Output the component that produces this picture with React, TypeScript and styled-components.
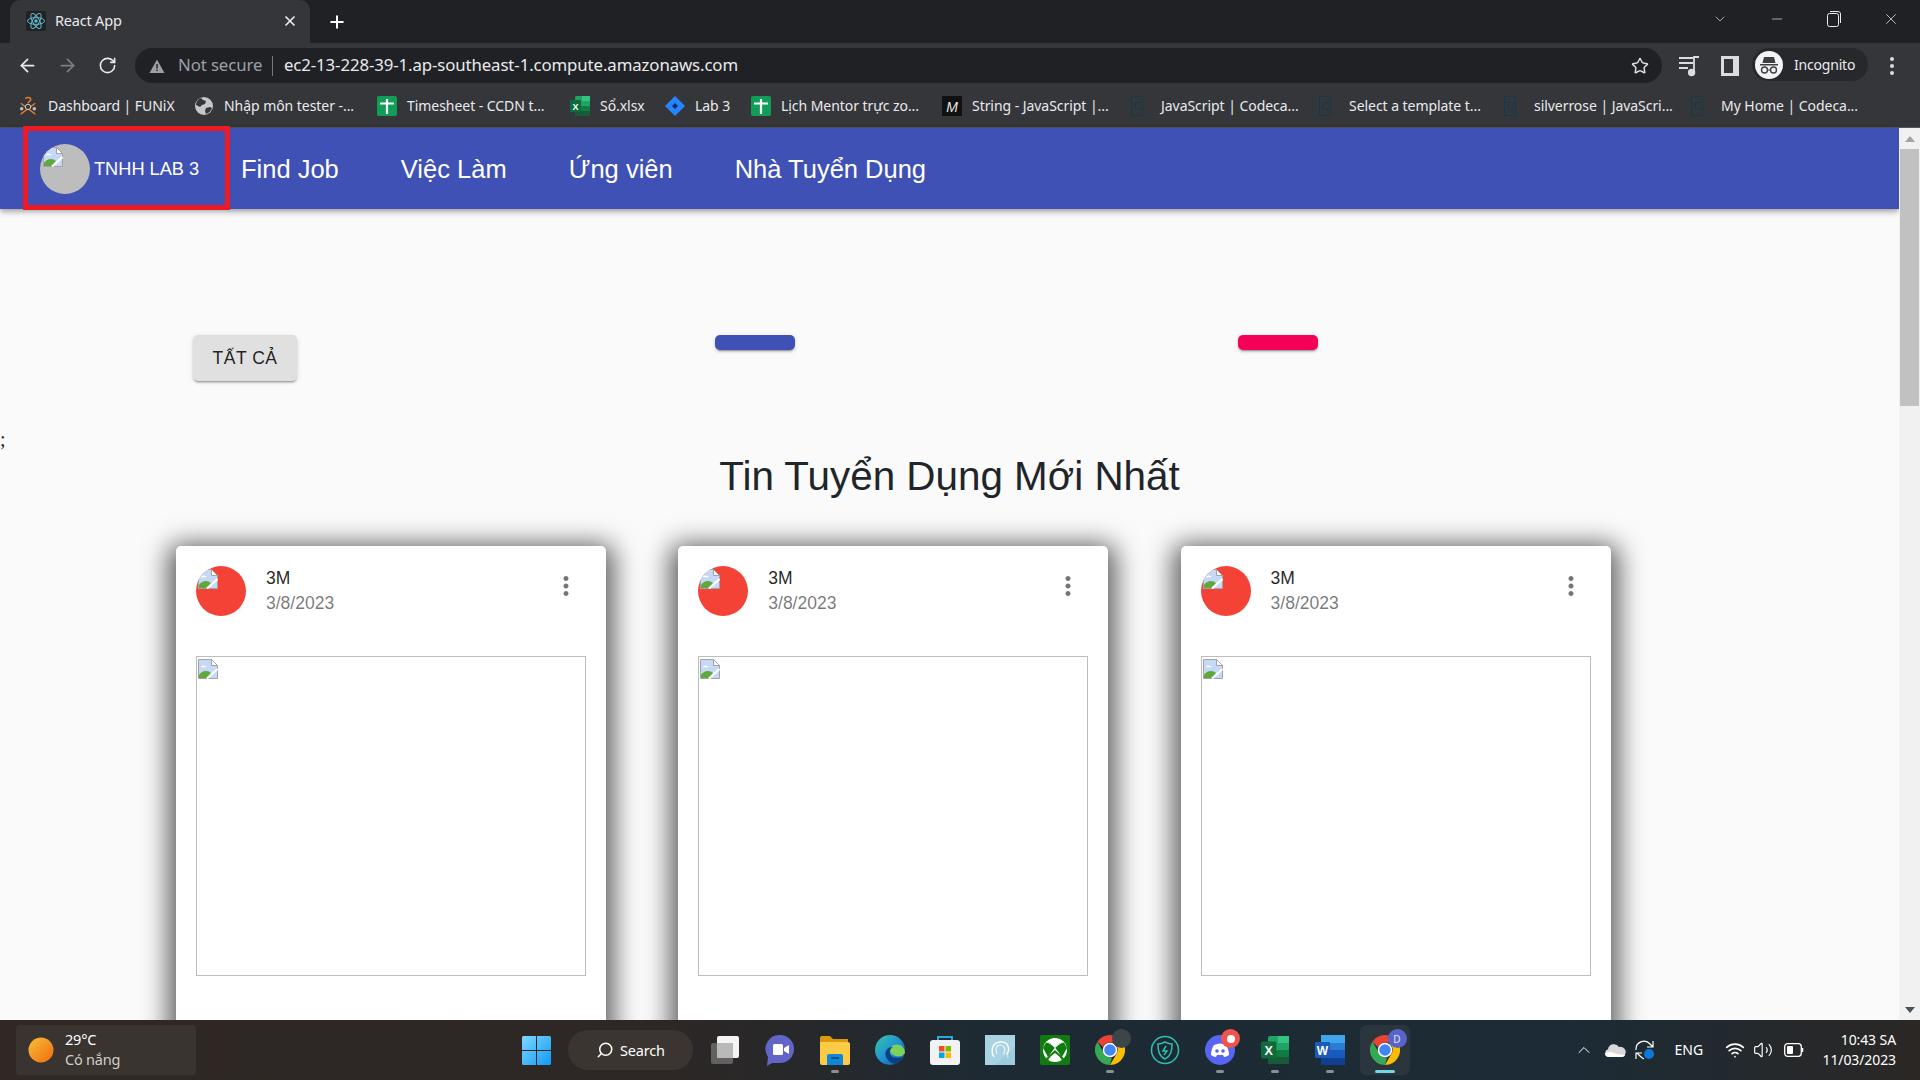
import React from "react";
import styled, { createGlobalStyle } from "styled-components";
import { ArrowLeft, ArrowRight, RotateCw, Star, Plus, X, ChevronDown, ChevronUp, Minus, Search, Wifi, Volume2 } from "lucide-react";

const Global = createGlobalStyle`
  html, body { margin: 0; padding: 0; height: 100%; overflow: hidden; background: #fafafa; }
  #root { height: 100%; }
  * { box-sizing: border-box; }
`;

const UI = `"Noto Sans", "Open Sans", sans-serif`;
const PAGE = `"Liberation Sans", Arial, sans-serif`;

const Screen = styled.div`display: flex; flex-direction: column; width: 1920px; height: 1080px; overflow: hidden;`;

/* Browser chrome */
const TabStrip = styled.div`display: flex; align-items: flex-end; height: 43px; padding-left: 10px; background: #202124; flex: none; position: relative;`;
const Tab = styled.div`
  display: flex; align-items: center; width: 300px; height: 43px; padding: 0 12px 2px 16px;
  background: #35363a; border-radius: 10px 10px 0 0; color: #e8eaed; font: 14.5px/1 ${UI};
`;
const TabTitle = styled.span`margin-left: 9px; flex: 1; letter-spacing: -0.2px;`;
const NewTab = styled.div`display: flex; align-items: center; justify-content: center; width: 24px; height: 24px; margin: 0 0 9px 15px; color: #fff;`;
const WindowControls = styled.div`display: flex; align-items: center; margin-left: auto; height: 36px; margin-bottom: 6px; color: #e8eaed; padding-right: 1px;`;
const WinBtn = styled.div<{ $w: number }>`display: flex; align-items: center; justify-content: center; width: ${p => p.$w}px;`;

const Toolbar = styled.div`display: flex; align-items: flex-start; height: 40px; padding-top: 5px; background: #35363a; flex: none;`;
const NavButton = styled.div<{ $dim?: boolean }>`display: flex; align-items: center; justify-content: center; width: 40px; height: 35px; color: ${p => p.$dim ? "#7b7e83" : "#e8eaed"};`;
const NavGroup = styled.div`display: flex; padding-left: 7px; width: 135px;`;
const Omnibox = styled.div`display: flex; align-items: center; width: 1527px; height: 35px; padding: 0 13px 0 14px; background: #202124; border-radius: 18px; font: 16.8px/1 ${UI};`;
const NotSecure = styled.span`margin-left: 13px; width: 83px; color: #9aa0a6; white-space: nowrap; letter-spacing: -0.1px;`;
const Divider = styled.span`width: 1px; height: 20px; margin: 0 11px; background: #75787d;`;
const Url = styled.span`color: #e8eaed; white-space: nowrap; letter-spacing: -0.1px; flex: 1;`;
const ToolIcon = styled.div<{ $lead?: number }>`display: flex; align-items: center; justify-content: center; width: 41px; height: 35px; margin-left: ${p => p.$lead ?? 0}px; color: #dadce0;`;
const IncognitoChip = styled.div`display: flex; align-items: center; width: 116px; height: 33px; margin-left: 2px; padding-left: 3px; background: #27282b; border-radius: 17px; color: #e8eaed; font: 14px/1 ${UI}; letter-spacing: -0.2px;`;
const IncognitoName = styled.span`margin-left: 11px;`;
const MenuButton = styled.div`display: flex; align-items: center; justify-content: center; width: 48px; height: 35px; color: #dadce0;`;

const Bookmarks = styled.div`display: flex; align-items: center; gap: 21px; height: 45px; padding: 1px 0 0 18px; background: #35363a; border-bottom: 1px solid #55575b; flex: none;`;
const Bookmark = styled.div`display: flex; align-items: center; gap: 10px; color: #e8eaed; font: 14px/1 ${UI}; white-space: nowrap; letter-spacing: -0.05px;`;
const BookmarkLabel = styled.span<{ $w: number }>`display: block; width: ${p => p.$w}px;`;

/* Page */
const Viewport = styled.div`display: flex; flex: 1; min-height: 0;`;
const Page = styled.div`flex: 1; min-width: 0; background: #fafafa; position: relative; clip-path: inset(-3px 0 0 0);`;
const AppBar = styled.header`
  display: flex; align-items: center; height: 81px; background: #3f51b5; position: relative;
  box-shadow: 0 2px 4px -1px rgba(0,0,0,.2), 0 4px 5px rgba(0,0,0,.14), 0 1px 10px rgba(0,0,0,.12);
`;
const Brand = styled.div`
  display: flex; align-items: center; width: 207px; height: 84px; margin: -1px 0 0 23px;
  padding: 2px 0 0 12px; border: 5px solid #ed1c24; flex: none;
  color: #fff; font: 400 18.2px/1 ${PAGE};
`;
const BrandAvatar = styled.div`display: flex; width: 50px; height: 50px; margin-right: 4px; padding: 3px; border-radius: 50%; background: #bdbdbd; overflow: hidden; flex: none;`;
const BrandName = styled.span`white-space: nowrap;`;
const NavLinks = styled.nav`display: flex; gap: 62px; margin-left: 11px; padding-top: 2px;`;
const NavLink = styled.a`color: #fff; font: 25.5px/1.2 ${PAGE}; white-space: nowrap;`;

const FilterRow = styled.div`display: flex; align-items: flex-start; padding: 126px 0 0 193px;`;
const AllButton = styled.button`
  width: 104px; height: 46px; padding: 2px 0 0; border: 0; border-radius: 5px; background: #e0e0e0; color: rgba(0,0,0,.87);
  font: 400 17.5px/1 ${PAGE}; letter-spacing: .5px;
  box-shadow: 0 3px 1px -2px rgba(0,0,0,.2), 0 2px 2px rgba(0,0,0,.14), 0 1px 5px rgba(0,0,0,.12);
`;
const Pill = styled.div<{ $color: string; $gap: number }>`
  width: 80px; height: 15px; margin-left: ${p => p.$gap}px; border-radius: 5px; background: ${p => p.$color};
  box-shadow: 0 3px 1px -2px rgba(0,0,0,.2), 0 2px 2px rgba(0,0,0,.14), 0 1px 5px rgba(0,0,0,.12);
`;
const Stray = styled.div`margin-top: 46px; height: 24px; font: 20px/24px "Liberation Serif", serif; color: #222;`;
const Heading = styled.h1`margin: 2px 0 0; text-align: center; font: 400 40.4px/46px ${PAGE}; color: #212529;`;
const Cards = styled.div`display: flex; gap: 72.3px; margin-top: 47px; padding-left: 176px;`;
const Card = styled.article`width: 430px; height: 700px; padding: 20px; flex: none; background: #fff; border-radius: 5px; box-shadow: 0 6px 26px 8px rgba(0,0,0,.62);`;
const CardHead = styled.div`display: flex; height: 50px;`;
const CardAvatar = styled.div`display: flex; width: 50px; height: 50px; padding: 3px 0 0 2px; border-radius: 50%; background: #f44336; overflow: hidden; flex: none;`;
const CardMeta = styled.div`margin-left: 20px; padding-top: 0; font: 17.5px/25px ${PAGE};`;
const CardTitle = styled.div`color: rgba(0,0,0,.87);`;
const CardDate = styled.div`color: rgba(0,0,0,.54);`;
const CardMenu = styled.div`margin: 5px 5px 0 auto; width: 30px; height: 30px; color: #757575;`;
const CardMedia = styled.div`height: 320px; margin-top: 40px; padding: 2px 1px; border: 1px solid #bdbdbd;`;

const Scrollbar = styled.div`display: flex; flex-direction: column; align-items: center; width: 21px; background: #f1f1f1; flex: none; position: relative;`;
const ScrollArrow = styled.div`display: flex; align-items: center; justify-content: center; width: 19px; height: 21px;`;
const ScrollThumb = styled.div`width: 19px; height: 257px; background: #c1c1c1;`;
const ScrollSpace = styled.div`flex: 1;`;

/* Taskbar */
const Taskbar = styled.footer`
  display: flex; align-items: center; height: 60px; flex: none; padding: 0 24px 0 16px;
  background: linear-gradient(90deg, #2f2825 0%, #2d2725 35%, #1d2a33 52%, #1c2b35 82%, #2b2725 100%);
  color: #fff; font: 14px/1 ${UI};
`;
const Weather = styled.div`display: flex; align-items: center; width: 180px; height: 50px; padding-left: 12px; background: #3a3431; border-radius: 4px; flex: none;`;
const WeatherText = styled.div`margin: -2px 0 0 11px; font-size: 14.5px; line-height: 20.5px; letter-spacing: -0.2px;`;
const WeatherSub = styled.div`color: #d0cdca;`;
const StartIcon = styled.div`display: flex; margin-left: 326px; flex: none;`;
const SearchPill = styled.div`display: flex; align-items: center; gap: 6px; width: 125px; height: 40px; margin: 0 4px 0 17px; padding-left: 28px; background: #3b3532; border-radius: 20px; flex: none; font-size: 14.5px; letter-spacing: -0.2px;`;
const TaskIcon = styled.div<{ $active?: boolean }>`
  display: flex; align-items: center; justify-content: center; width: 55px; height: 50px; position: relative; flex: none;
  ${p => p.$active ? "background: #2a353d; border-radius: 6px; margin: 0 2.5px; width: 50px;" : ""}
`;
const RunDot = styled.span<{ $active?: boolean }>`
  position: absolute; left: 50%; bottom: 2px; height: 3px; border-radius: 2px; transform: translateX(-50%);
  width: ${p => p.$active ? 20 : 8}px; background: ${p => p.$active ? "#76d6e0" : "#8a8f93"};
`;
const Badge = styled.span<{ $c: string; $right: number }>`
  position: absolute; right: ${p => p.$right}px; top: 4px; width: 19px; height: 19px; border-radius: 50%; background: ${p => p.$c};
  display: flex; align-items: center; justify-content: center; font: 10px/1 ${UI}; color: #dfe3ff;
`;
const BadgeDot = styled.span`width: 8px; height: 8px; border-radius: 50%; background: #fff;`;
const Tray = styled.div`display: flex; align-items: center; margin-left: auto;`;
const TrayIcon = styled.div<{ $w: number }>`display: flex; align-items: center; justify-content: center; width: ${p => p.$w}px; color: #fff;`;
const Lang = styled.span`width: 46.5px; font-size: 14px; margin-left: 14.5px; letter-spacing: 0;`;
const Clock = styled.div`margin-left: 11.5px; text-align: right; font-size: 14px; line-height: 20px; letter-spacing: -0.1px;`;

/* Drawn icons */
const Broken = () => (
  <svg width="20" height="20" viewBox="0 0 20 20" style={{ flex: "none" }}>
    <path d="M.5.5h13l6 6v13H.5z" fill="#c5d9f7" stroke="#a3a3a3" />
    <path d="M13.5.5v6h6z" fill="#fff" stroke="#a3a3a3" />
    <path d="M3 8c0-1.500 3-2 4-1 1.500-.3 2 1.300.5 1.300H3z" fill="#fff" />
    <path d="M1 19v-3c3-5 9-5 12-2l-4 5z" fill="#5fa83c" />
    <path d="M19.500 10 9 19.500" stroke="#fff" strokeWidth="2.200" />
  </svg>
);
const ReactLogo = () => (
  <svg width="20" height="20" viewBox="0 0 20 20">
    <rect width="20" height="20" rx="2" fill="#222" />
    <g fill="none" stroke="#61b8cf" strokeWidth="1">
      <ellipse cx="10" cy="10" rx="8.500" ry="3.400" />
      <ellipse cx="10" cy="10" rx="8.500" ry="3.400" transform="rotate(60 10 10)" />
      <ellipse cx="10" cy="10" rx="8.500" ry="3.400" transform="rotate(120 10 10)" />
    </g>
    <circle cx="10" cy="10" r="1.700" fill="#61b8cf" />
  </svg>
);
const Funix = () => (
  <svg width="20" height="20" viewBox="0 0 20 22">
    <path d="M2 20 18 8M18 20 2 8" stroke="#e8772a" strokeWidth="1.600" />
    <circle cx="10" cy="12" r="3" fill="#3a3a3a" stroke="#d9d9d9" /><circle cx="3" cy="14" r="2" fill="#bbb" /><circle cx="17" cy="14" r="2" fill="#bbb" />
    <path d="M7 3c1-2 6-2 6 1 0 2-3 2-3 4" fill="none" stroke="#e8772a" strokeWidth="1.600" />
  </svg>
);
const Globe = () => (
  <svg width="20" height="20" viewBox="0 0 20 20">
    <circle cx="10" cy="10" r="9" fill="#c4c7cc" />
    <path d="M7 2c-3 1-5 4-5 7l4 2 2-2 3-1 1-3-3-1zM12 12l4-1 2 1c-1 3-3 5-6 6l-1-3z" fill="#35363a" />
  </svg>
);
const Sheets = () => (
  <svg width="20" height="20" viewBox="0 0 20 20">
    <rect width="20" height="20" rx="2" fill="#0f9d58" />
    <path d="M3 7.500h14M10 3v15" stroke="#fff" strokeWidth="2.200" />
  </svg>
);
const Excel = ({ s = 20 }: { s?: number }) => (
  <svg width={s} height={s} viewBox="0 0 20 20">
    <rect x="5" width="15" height="20" rx="1.500" fill="#21a366" />
    <rect x="12" width="8" height="5" fill="#33c481" />
    <rect x="5" y="10" width="15" height="5" fill="#107c41" />
    <rect x="5" y="15" width="15" height="5" fill="#185c37" />
    <rect y="4" width="11" height="12" rx="1" fill="#0f6b3a" />
    <text x="5.500" y="13.500" textAnchor="middle" fontSize="9" fontWeight="700" fontFamily="Liberation Sans" fill="#fff">X</text>
  </svg>
);
const Jira = () => (
  <svg width="20" height="20" viewBox="0 0 20 20">
    <path d="M10 0 20 10 10 20 0 10z" fill="#2684ff" />
    <path d="M10 7 13 10l-3 3-3-3z" fill="#0b2e6b" />
  </svg>
);
const MLogo = () => (
  <svg width="20" height="20" viewBox="0 0 20 20">
    <rect width="20" height="20" fill="#111" />
    <text x="10" y="15.500" textAnchor="middle" fontSize="14" fontStyle="italic" fontFamily="Liberation Sans" fill="#e8e8e8">M</text>
  </svg>
);
const Codecademy = () => (
  <svg width="20" height="20" viewBox="0 0 20 20">
    <rect x=".5" y=".5" width="11" height="19" fill="none" stroke="#12394c" />
    <text x="6" y="14" textAnchor="middle" fontSize="10" fontFamily="Liberation Sans" fill="#12394c">C</text>
    <rect x="17" y="18.500" width="2" height="1" fill="#12394c" />
  </svg>
);
const Warning = () => (
  <svg width="16" height="16" viewBox="0 0 16 16"><path d="M8 1.500 15.500 15H.5z" fill="#9aa0a6" /><path d="M7.300 6h1.400v4.600H7.300zM7.300 11.600h1.400V13H7.300z" fill="#202124" /></svg>
);
const Queue = () => (
  <svg width="22" height="22" viewBox="0 0 22 22" fill="none" stroke="#dadce0" strokeWidth="1.800">
    <path d="M1 3h14M1 8h14M1 13h9" /><path d="M16 16V2h5" /><circle cx="13.600" cy="17.500" r="2.800" fill="#dadce0" />
  </svg>
);
const SidePanel = () => (
  <svg width="18" height="20" viewBox="0 0 18 20"><path fillRule="evenodd" d="M0 0h18v20H0zM3 3v14h9V3z" fill="#dadce0" /></svg>
);
const Spy = () => (
  <svg width="28" height="28" viewBox="0 0 28 28">
    <circle cx="14" cy="14" r="14" fill="#f1f3f4" />
    <path d="M9 6h10l1.500 6h-13z" fill="#3c4043" /><path d="M5 13h18v1.500H5z" fill="#3c4043" />
    <circle cx="9.500" cy="19" r="3" fill="none" stroke="#3c4043" strokeWidth="1.400" /><circle cx="18.500" cy="19" r="3" fill="none" stroke="#3c4043" strokeWidth="1.400" />
    <path d="M12.500 19h3" stroke="#3c4043" />
  </svg>
);
const Restore = () => (
  <svg width="14" height="16" viewBox="0 0 14 16" fill="none" stroke="#e8eaed">
    <rect x=".5" y="2.500" width="11" height="13" rx="2" /><path d="M3 .5h8c1.500 0 2.500 1 2.500 2.500v9" />
  </svg>
);
const Dots = () => (
  <svg width="30" height="30" viewBox="0 0 24 24" fill="currentColor"><path d="M12 8c1.100 0 2-.9 2-2s-.9-2-2-2-2 .9-2 2 .9 2 2 2zm0 2c-1.100 0-2 .9-2 2s.9 2 2 2 2-.9 2-2-.9-2-2-2zm0 6c-1.100 0-2 .9-2 2s.9 2 2 2 2-.9 2-2-.9-2-2-2z" /></svg>
);
const Sun = () => (
  <svg width="26" height="26" viewBox="0 0 26 26"><defs><linearGradient id="sun" x1="0" y1="0" x2="1" y2="1"><stop offset="0" stopColor="#f5c13c" /><stop offset="1" stopColor="#f26a0c" /></linearGradient></defs><circle cx="13" cy="13" r="12.500" fill="url(#sun)" /></svg>
);
const WinLogo = () => (
  <svg width="29" height="29" viewBox="0 0 29 29">
    <defs><linearGradient id="win" x1="0" y1="0" x2="1" y2="1"><stop offset="0" stopColor="#7fd6ff" /><stop offset="1" stopColor="#0f9bf5" /></linearGradient></defs>
    <path d="M0 1.500A1.500 1.500 0 0 1 1.500 0H14v14H0zM15 0h12.500A1.500 1.500 0 0 1 29 1.500V14H15zM0 15h14v14H1.500A1.500 1.500 0 0 1 0 27.500zM15 15h14v12.500a1.500 1.500 0 0 1-1.500 1.500H15z" fill="url(#win)" />
  </svg>
);
const TaskView = () => (
  <svg width="32" height="32" viewBox="0 0 32 32">
    <rect x="8" y="2" width="22" height="22" rx="2" fill="#f4f4f4" />
    <rect x="2" y="9" width="22" height="21" rx="2" fill="#6c6c6c" fillOpacity=".85" />
    <rect x="8" y="9" width="16" height="15" fill="#b9b9b9" />
  </svg>
);
const Meet = () => (
  <svg width="30" height="32" viewBox="0 0 30 32">
    <path d="M15 1a14 14 0 0 1 0 28H7l-5 3 1-9A14 14 0 0 1 15 1z" fill="#6264c8" />
    <rect x="8" y="10" width="10" height="11" rx="1.500" fill="#fff" /><path d="m19 14 5-3v9l-5-3z" fill="#fff" />
  </svg>
);
const Explorer = () => (
  <svg width="30" height="30" viewBox="0 0 30 30">
    <path d="M0 3a2 2 0 0 1 2-2h8l3 3h15v6H0z" fill="#d99a0c" />
    <path d="M0 7h28a2 2 0 0 1 2 2v19a2 2 0 0 1-2 2H2a2 2 0 0 1-2-2z" fill="#fccb45" />
    <path d="M9 19h12a2 2 0 0 1 2 2v9H7v-9a2 2 0 0 1 2-2z" fill="#0f87d8" /><path d="M11 23h8" stroke="#063f6e" strokeWidth="1.500" />
  </svg>
);
const Edge = () => (
  <svg width="30" height="30" viewBox="0 0 30 30">
    <defs><linearGradient id="edge" x1="0" y1="0" x2="1" y2="1"><stop offset="0" stopColor="#38c7a4" /><stop offset=".55" stopColor="#1c8fd8" /><stop offset="1" stopColor="#0a4f97" /></linearGradient></defs>
    <circle cx="15" cy="15" r="15" fill="url(#edge)" />
    <path d="M30 18c0-7-6-10-11-8-3 1-5 5-3 8s7 4 11 3z" fill="#7bd35a" />
    <path d="M27 22c-5 2-11 1-12-3-1-3 1-6 3-7-6 0-9 5-7 10 2 4 6 7 10 7 3-1 5-3 6-7z" fill="#0c3f82" />
  </svg>
);
const Store = () => (
  <svg width="30" height="30" viewBox="0 0 30 30">
    <path d="M8 6V2h14v4" fill="none" stroke="#2aa7e0" strokeWidth="2" />
    <rect y="5" width="30" height="25" rx="3" fill="#f2f2f2" />
    <rect x="9" y="11" width="5.500" height="5.500" fill="#f25022" /><rect x="15.500" y="11" width="5.500" height="5.500" fill="#7fba00" />
    <rect x="9" y="17.500" width="5.500" height="5.500" fill="#00a4ef" /><rect x="15.500" y="17.500" width="5.500" height="5.500" fill="#ffb900" />
  </svg>
);
const Head = () => (
  <svg width="30" height="30" viewBox="0 0 30 30">
    <rect width="30" height="30" fill="#a8d3e3" />
    <path d="M9 22c-3-5-3-14 6-15s10 8 7 12l1 4" fill="none" stroke="#fff" strokeWidth="1.400" />
    <path d="M12 19c-2-4-1-9 3-9s6 4 4 7v3" fill="none" stroke="#e8f4f8" strokeWidth="1.200" />
    <path d="M10 30 30 12v18z" fill="#8cc3d8" fillOpacity=".4" />
  </svg>
);
const Xbox = () => (
  <svg width="30" height="30" viewBox="0 0 30 30">
    <rect width="30" height="30" rx="2" fill="#107c10" />
    <circle cx="15" cy="15" r="12" fill="#fff" />
    <path d="M15 12.500C12 9.500 9 7 6.500 6.500L3 13l5 9zM15 12.500c3-3 6-5.500 8.500-6L27 13l-5 9zM15 18c-3 2-6 5-7 7.500l-2-2 9-8.500 9 8.500-2 2c-1-2.500-4-5.500-7-7.500z" fill="#107c10" />
    <path d="M6 7c3 0 6 3 9 5.500 3-2.500 6-5.500 9-5.500" fill="none" stroke="#fff" strokeWidth="1" />
  </svg>
);
const ChromeLogo = () => (
  <svg width="30" height="30" viewBox="0 0 30 30">
    <path d="M15 0a15 15 0 0 1 13 7.500H15a7.500 7.500 0 0 0-7 4.500L2.500 6.700A15 15 0 0 1 15 0z" fill="#ea4335" />
    <path d="M28 7.500A15 15 0 0 1 15 30l6.500-11.200A7.500 7.500 0 0 0 20 9z" fill="#fbbc04" />
    <path d="M15 30A15 15 0 0 1 2.500 6.700L9 18a7.500 7.500 0 0 0 8 4.500z" fill="#34a853" />
    <circle cx="15" cy="15" r="6.500" fill="#4285f4" stroke="#fff" strokeWidth="1.500" />
  </svg>
);
const Shield = () => (
  <svg width="30" height="30" viewBox="0 0 30 30" fill="none" stroke="#2fbfb3" strokeWidth="1.500">
    <circle cx="15" cy="15" r="13.500" /><path d="M8 9c3 0 5-1 7-2 2 1 4 2 7 2 0 7-1 12-7 15-6-3-7-8-7-15z" /><path d="m16 11-3 5h4l-3 4" />
  </svg>
);
const Discord = () => (
  <svg width="30" height="30" viewBox="0 0 30 30">
    <circle cx="15" cy="15" r="15" fill="#5865f2" />
    <path d="M9 10c4-2 8-2 12 0 2 3 3 6 3 10-2 1-3 2-5 2l-1-2h-6l-1 2c-2 0-3-1-5-2 0-4 1-7 3-10z" fill="#fff" />
    <circle cx="12" cy="16" r="1.800" fill="#5865f2" /><circle cx="18" cy="16" r="1.800" fill="#5865f2" />
  </svg>
);
const Word = () => (
  <svg width="30" height="30" viewBox="0 0 30 30">
    <rect x="6" width="24" height="30" rx="1.500" fill="#2b7cd3" />
    <rect x="6" width="24" height="8" fill="#41a5ee" /><rect x="6" y="15" width="24" height="8" fill="#185abd" /><rect x="6" y="23" width="24" height="7" fill="#103f91" />
    <rect y="7" width="15" height="16" rx="1" fill="#1a5bb8" />
    <text x="7.500" y="19.500" textAnchor="middle" fontSize="12" fontWeight="700" fontFamily="Liberation Sans" fill="#fff">W</text>
  </svg>
);
const Cloud = () => (
  <svg width="22" height="14" viewBox="0 0 22 14"><path d="M5 14a4 4 0 0 1-1-7.800A6 6 0 0 1 15 4a4.500 4.500 0 0 1 3 10z" fill="#d8d8d8" /><path d="M5 14c-2 0-4-1-4-3s5-3 9-1 8 1 11 2c0 1-2 2-3 2z" fill="#fff" /></svg>
);
const Sync = () => (
  <svg width="22" height="22" viewBox="0 0 22 22" fill="none" stroke="#fff" strokeWidth="1.200">
    <path d="M2 11a8 8 0 0 1 14-6l3 3M19 2v6h-6M3 14l3 3c1 1 2 2 4 3M2 20v-6h6" />
    <circle cx="15" cy="15" r="5" fill="#0a78dc" stroke="none" />
  </svg>
);
const Battery = () => (
  <svg width="20" height="14" viewBox="0 0 20 14" fill="none"><rect x=".7" y=".7" width="16.600" height="12.600" rx="3" stroke="#fff" strokeWidth="1.300" /><rect x="3" y="3" width="6" height="8" rx="1" fill="#fff" /><path d="M18.500 5v4" stroke="#fff" strokeWidth="1.500" /></svg>
);

const bookmarks: { icon: React.ReactNode; label: string; w: number }[] = [
  { icon: <Funix />, label: "Dashboard | FUNiX", w: 125 },
  { icon: <Globe />, label: "Nhập môn tester -...", w: 132 },
  { icon: <Sheets />, label: "Timesheet - CCDN t...", w: 142 },
  { icon: <Excel />, label: "Sổ.xlsx", w: 44 },
  { icon: <Jira />, label: "Lab 3", w: 35 },
  { icon: <Sheets />, label: "Lịch Mentor trực zo...", w: 140 },
  { icon: <MLogo />, label: "String - JavaScript |...", w: 138 },
  { icon: <Codecademy />, label: "JavaScript | Codeca...", w: 137 },
  { icon: <Codecademy />, label: "Select a template t...", w: 134 },
  { icon: <Codecademy />, label: "silverrose | JavaScri...", w: 136 },
  { icon: <Codecademy />, label: "My Home | Codeca...", w: 137 },
];

const taskApps: { icon: React.ReactNode; run?: boolean; badge?: string; dot?: boolean; right?: number }[] = [
  { icon: <TaskView /> },
  { icon: <Meet /> },
  { icon: <Explorer />, run: true },
  { icon: <Edge /> },
  { icon: <Store /> },
  { icon: <Head /> },
  { icon: <Xbox /> },
  { icon: <ChromeLogo />, run: true, badge: "#3d4549", right: 6 },
  { icon: <Shield /> },
  { icon: <Discord />, run: true, badge: "#ef5350", dot: true, right: 7 },
  { icon: <Excel s={28} />, run: true },
  { icon: <Word />, run: true },
];

const cards = [0, 1, 2];

export default function App() {
  return (
    <Screen>
      <Global />
      <TabStrip>
        <Tab>
          <ReactLogo />
          <TabTitle>React App</TabTitle>
          <X size={16} strokeWidth={2.6} color="#e8eaed" />
        </Tab>
        <NewTab><Plus size={20} strokeWidth={2.4} /></NewTab>
        <WindowControls>
          <WinBtn $w={57}><ChevronDown size={16} strokeWidth={1} /></WinBtn>
          <WinBtn $w={57}><Minus size={16} strokeWidth={1} /></WinBtn>
          <WinBtn $w={57}><Restore /></WinBtn>
          <WinBtn $w={57}><X size={18} strokeWidth={1} /></WinBtn>
        </WindowControls>
      </TabStrip>
      <Toolbar>
        <NavGroup>
          <NavButton><ArrowLeft size={21} /></NavButton>
          <NavButton $dim><ArrowRight size={21} /></NavButton>
          <NavButton><RotateCw size={19} /></NavButton>
        </NavGroup>
        <Omnibox>
          <Warning />
          <NotSecure>Not secure</NotSecure>
          <Divider />
          <Url>ec2-13-228-39-1.ap-southeast-1.compute.amazonaws.com</Url>
          <Star size={18} color="#dadce0" />
        </Omnibox>
        <ToolIcon $lead={6}><Queue /></ToolIcon>
        <ToolIcon><SidePanel /></ToolIcon>
        <IncognitoChip><Spy /><IncognitoName>Incognito</IncognitoName></IncognitoChip>
        <MenuButton><svg width="6" height="20" viewBox="0 0 6 20" fill="currentColor"><circle cx="3" cy="3" r="2" /><circle cx="3" cy="10" r="2" /><circle cx="3" cy="17" r="2" /></svg></MenuButton>
      </Toolbar>
      <Bookmarks>
        {bookmarks.map(b => (
          <Bookmark key={b.label}>{b.icon}<BookmarkLabel $w={b.w}>{b.label}</BookmarkLabel></Bookmark>
        ))}
      </Bookmarks>
      <Viewport>
        <Page>
          <AppBar>
            <Brand>
              <BrandAvatar><Broken /></BrandAvatar>
              <BrandName>TNHH LAB 3</BrandName>
            </Brand>
            <NavLinks>
              <NavLink>Find Job</NavLink>
              <NavLink>Việc Làm</NavLink>
              <NavLink>Ứng viên</NavLink>
              <NavLink>Nhà Tuyển Dụng</NavLink>
            </NavLinks>
          </AppBar>
          <FilterRow>
            <AllButton>TẤT CẢ</AllButton>
            <Pill $color="#3f51b5" $gap={418} />
            <Pill $color="#f50057" $gap={443} />
          </FilterRow>
          <Stray>;</Stray>
          <Heading>Tin Tuyển Dụng Mới Nhất</Heading>
          <Cards>
            {cards.map(c => (
              <Card key={c}>
                <CardHead>
                  <CardAvatar><Broken /></CardAvatar>
                  <CardMeta>
                    <CardTitle>3M</CardTitle>
                    <CardDate>3/8/2023</CardDate>
                  </CardMeta>
                  <CardMenu><Dots /></CardMenu>
                </CardHead>
                <CardMedia><Broken /></CardMedia>
              </Card>
            ))}
          </Cards>
        </Page>
        <Scrollbar>
          <ScrollArrow><svg width="10" height="6" viewBox="0 0 10 6"><path d="M5 0 10 6H0z" fill="#a3a3a3" /></svg></ScrollArrow>
          <ScrollThumb />
          <ScrollSpace />
          <ScrollArrow><svg width="10" height="6" viewBox="0 0 10 6"><path d="M5 6 0 0h10z" fill="#505050" /></svg></ScrollArrow>
        </Scrollbar>
      </Viewport>
      <Taskbar>
        <Weather>
          <Sun />
          <WeatherText>29°C<WeatherSub>Có nắng</WeatherSub></WeatherText>
        </Weather>
        <StartIcon><WinLogo /></StartIcon>
        <SearchPill><Search size={18} style={{ transform: "scaleX(-1)" }} />Search</SearchPill>
        {taskApps.map((a, i) => (
          <TaskIcon key={i}>
            {a.icon}
            {a.badge && <Badge $c={a.badge} $right={a.right ?? 3}>{a.dot && <BadgeDot />}</Badge>}
            {a.run && <RunDot />}
          </TaskIcon>
        ))}
        <TaskIcon $active>
          <ChromeLogo />
          <Badge $c="#5865c8" $right={3}>D</Badge>
          <RunDot $active />
        </TaskIcon>
        <Tray>
          <TrayIcon $w={32}><ChevronUp size={20} strokeWidth={1.2} /></TrayIcon>
          <TrayIcon $w={30}><Cloud /></TrayIcon>
          <TrayIcon $w={30}><Sync /></TrayIcon>
          <Lang>ENG</Lang>
          <TrayIcon $w={28}><Wifi size={20} /></TrayIcon>
          <TrayIcon $w={28}><Volume2 size={20} strokeWidth={1.4} /></TrayIcon>
          <TrayIcon $w={34}><Battery /></TrayIcon>
          <Clock>10:43 SA<br />11/03/2023</Clock>
        </Tray>
      </Taskbar>
    </Screen>
  );
}
